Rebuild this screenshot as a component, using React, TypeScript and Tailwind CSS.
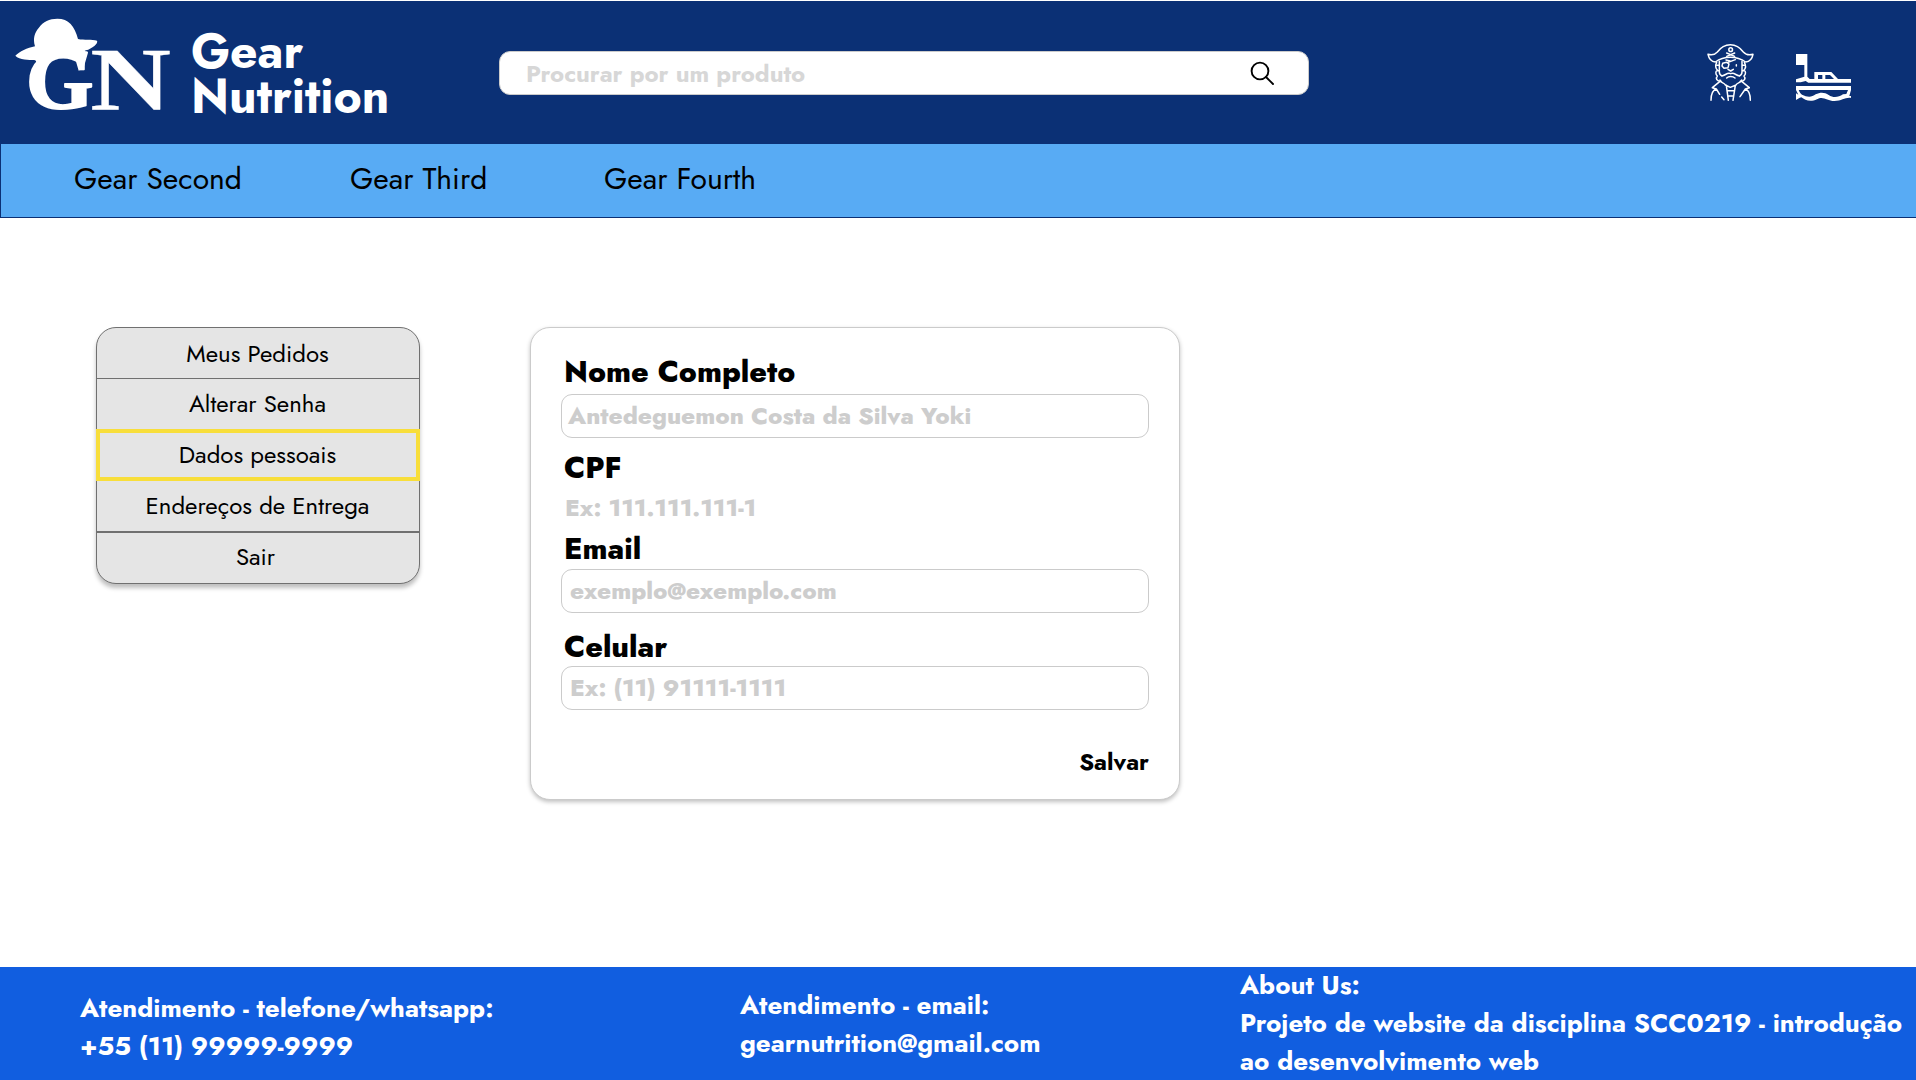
import React from "react";

function Logo() {
  return (
    <svg viewBox="36 45 486 300" className="h-[100px] w-[162px] overflow-visible" fill="#fff" aria-label="GN">
      <path d="M46 167C58 156 82 143 105 139C98 115 104 98 116 84C130 64 148 56 172 56C206 56 224 78 234 117C252 121 276 117 291 122C296 130 276 146 258 151C246 155 266 152 264 158L250 206L236 212L226 178C200 170 150 170 140 186L110 200C108 190 112 182 102 180C88 180 58 180 46 167Z" />
      <g fontFamily='"Liberation Serif", serif' fontWeight="700" stroke="#fff" strokeLinejoin="round">
        <text x="77" y="325" fontSize="250" strokeWidth="5" textLength="204" lengthAdjust="spacingAndGlyphs">G</text>
        <text x="271" y="328" fontSize="266" strokeWidth="1" textLength="242" lengthAdjust="spacingAndGlyphs">N</text>
      </g>
    </svg>
  );
}

function PirateIcon() {
  return (
    <svg
      viewBox="78 66 150 180"
      className="h-[60px] w-[50px]"
      fill="none"
      stroke="#fff"
      strokeWidth="4.5"
      strokeLinejoin="round"
      strokeLinecap="round"
    >
      <path d="M84 103C98 107 105 104 112 96C122 82 136 74 151 74C166 74 180 82 190 96C197 104 205 107 219 103C216 119 209 125 197 126C181 115 166 112 151 112C136 112 121 115 106 126C93 125 87 117 84 103Z" />
      <circle cx="152" cy="89" r="5.5" />
      <path d="M140 99L164 109M164 99L140 109" />
      <path d="M110 127C106 136 107 145 112 150C106 154 106 162 112 168C106 175 110 184 123 184M193 127C198 136 197 145 192 150C198 154 198 162 192 168C198 175 194 184 181 184" />
      <path d="M118 124V156C118 162 122 166 126 168M186 124V156C186 162 182 166 178 168M118 136H110M118 152H112M186 136H194M186 152H192" />
      <path d="M128 130L140 127L147 132L144 143L132 145L126 138ZM142 128L166 119M138 120L150 123M169 134V138" />
      <path d="M144 148L152 153L160 148M126 167C135 168 141 156 152 161C163 156 169 168 178 167M140 174C146 168 158 168 165 174" />
      <path d="M120 180C122 190 133 187 136 195L151 202L168 195C171 187 182 190 185 180M139 196L145 241M166 196L159 241M143 212H161M145 228H160" />
      <path d="M120 184L97 203L109 207C96 211 93 223 93 241M185 184L208 203L196 207C208 211 211 223 211 241M109 207L119 223M125 231L132 239M196 207L180 230" />
    </svg>
  );
}

function BoatIcon() {
  return (
    <svg viewBox="345 99 171 147" className="h-[49px] w-[57px]">
      <path
        fill="#fff"
        fillRule="evenodd"
        d="M348 102H382V170L389 177H403V156H454L474 177H513V210L508 228H513V234C496 231 486 243 463 243C441 243 429 226 411 238C391 247 375 241 364 232C358 234 353 238 348 240V220L355 224L348 210V178L373 170V135H348ZM414 165V177H427V165ZM436 165V177H462L450 165ZM348 187V198H513V188H385L377 183L362 187ZM356 210C360 219 363 222 366 224C382 232 395 232 407 223C420 216 434 216 446 225C461 235 475 232 489 223L499 222L504 210Z"
      />
    </svg>
  );
}

function SearchIcon() {
  return (
    <svg viewBox="0 0 26 26" className="h-[26px] w-[26px]" fill="none" stroke="#000" strokeWidth="1.9" strokeLinecap="round">
      <circle cx="11" cy="11" r="8.4" />
      <path d="M17 17L24 24" />
    </svg>
  );
}

const inputBox =
  "flex h-[44px] shrink-0 items-center rounded-[11px] border border-[#cbcbcb] bg-white text-[24px] leading-[42px] font-extrabold text-[#cdcdcd]";
const label = "ml-[3px] h-[36px] text-[30px] leading-[36px] font-extrabold";

export default function App() {
  return (
    <div className="flex h-[1080px] w-[1916px] flex-col overflow-hidden bg-white pt-px font-[Jost,Lato,sans-serif] whitespace-nowrap text-black">
      <header className="flex h-[143px] shrink-0 items-start bg-[#0b3075] text-white">
        <div className="mt-[14px] ml-[12px] flex">
          <Logo />
        </div>
        <h1 className="mt-[28px] ml-[17px] w-[308px] text-[48px] leading-[45px] font-bold">
          <span className="block">Gear</span>
          <span className="block">Nutrition</span>
        </h1>
        <div className="mt-[50px] flex h-[44px] w-[810px] items-center justify-between rounded-[11px] border border-[#cbcbcb] bg-white pr-[33px] pl-[26px]">
          <span className="pt-px text-[24px] leading-[42px] font-bold text-[#d7d7d7]">Procurar por um produto</span>
          <SearchIcon />
        </div>
        <div className="mt-[41px] ml-auto flex">
          <PirateIcon />
        </div>
        <div className="mt-[52px] mr-[64px] ml-[39px] flex">
          <BoatIcon />
        </div>
      </header>

      <nav className="flex h-[74px] shrink-0 border-b border-l border-[#0b3075] bg-[#58abf4] pt-[13px] pl-[73px] text-[30px] leading-[44px]">
        <a className="w-[276px]">Gear Second</a>
        <a className="w-[254px]">Gear Third</a>
        <a>Gear Fourth</a>
      </nav>

      <main className="flex flex-1 items-start pt-[109px] pl-[96px]">
        <ul className="flex h-[257px] w-[324px] flex-col rounded-[20px] border border-[#707070] bg-[#e5e5e5] text-center text-[24px] shadow-[0_4px_4px_rgba(0,0,0,0.25)]">
          <li className="h-[51px] border-b border-[#707070] pr-px leading-[52px]">Meus Pedidos</li>
          <li className="h-[50px] pr-px leading-[50px]">Alterar Senha</li>
          <li className="-mx-px h-[52px] border-4 border-[#f8de3a] bg-[#e5e5e5] pr-px leading-[44px]">Dados pessoais</li>
          <li className="h-[52px] border-b-2 border-[#707070] pr-px leading-[50px]">Endereços de Entrega</li>
          <li className="h-[50px] pr-[5px] leading-[48px]">Sair</li>
        </ul>

        <form className="ml-[110px] flex h-[473px] w-[650px] flex-col rounded-[20px] border border-[#cbcbcb] bg-white px-[30px] pt-[26px] shadow-[0_2px_4px_rgba(0,0,0,0.25)]">
          <label className={label}>Nome Completo</label>
          <div className={inputBox + " mt-[4px] pl-[6px]"}>Antedeguemon Costa da Silva Yoki</div>
          <label className={label + " mt-[12px]"}>CPF</label>
          <div className="mt-[7px] ml-[4px] h-[30px] text-[24px] leading-[30px] font-extrabold text-[#cdcdcd]">
            Ex: 111.111.111-1
          </div>
          <label className={label + " mt-[8px]"}>Email</label>
          <div className={inputBox + " mt-[2px] pl-[8px]"}>exemplo@exemplo.com</div>
          <label className={label + " mt-[16px]"}>Celular</label>
          <div className={inputBox + " mt-px pl-[8px]"}>Ex: (11) 91111-1111</div>
          <button type="button" className="mt-[37px] h-[30px] self-end text-[24px] leading-[30px] font-bold">
            Salvar
          </button>
        </form>
      </main>

      <footer className="flex h-[113px] shrink-0 items-start bg-[#115ee0] pl-[80px] text-[26px] leading-[38px] font-bold text-white">
        <div className="mt-[22px] w-[660px] shrink-0">
          <p>Atendimento - telefone/whatsapp:</p>
          <p>+55 (11) 99999-9999</p>
        </div>
        <div className="mt-[19px] w-[500px] shrink-0">
          <p>Atendimento - email:</p>
          <p>gearnutrition@gmail.com</p>
        </div>
        <div className="-mt-px shrink-0">
          <p>About Us:</p>
          <p>Projeto de website da disciplina SCC0219 - introdução</p>
          <p>ao desenvolvimento web</p>
        </div>
      </footer>
    </div>
  );
}
